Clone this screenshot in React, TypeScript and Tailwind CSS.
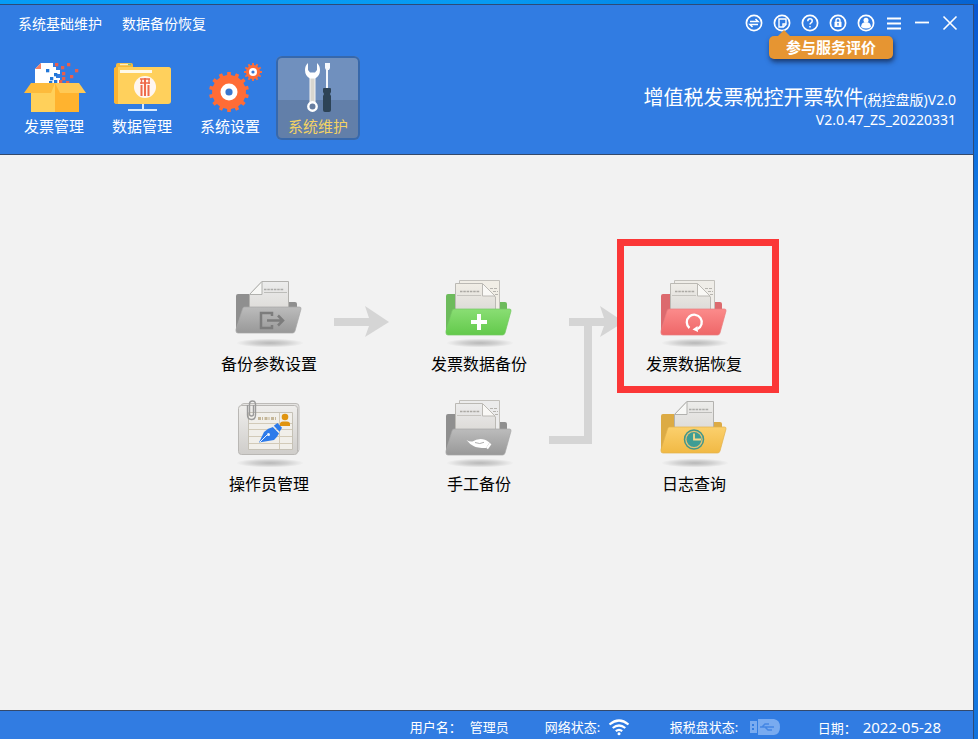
import type { ReactNode } from "react";

type Palette = { back: string; top: string; bottom: string; edge: string; paper: string };

const palettes: Record<string, Palette> = {
  gray: { back: "#8f8f8f", top: "#bcbcbc", bottom: "#989898", edge: "#a8a8a8", paper: "#ececec" },
  green: { back: "#6dbb5c", top: "#8ade74", bottom: "#63c94b", edge: "#74c962", paper: "#f1eee6" },
  red: { back: "#dc6a6e", top: "#fb8b8b", bottom: "#ee6768", edge: "#ea7c7e", paper: "#efede8" },
  yellow: { back: "#dcab45", top: "#fbd06d", bottom: "#f1b944", edge: "#e3b24c", paper: "#ececea" },
};

function IconShadow({ id }: { id: string }) {
  return (
    <>
      <defs>
        <radialGradient id={id + "-shadow"}>
          <stop offset="0" stopColor="#000" stopOpacity=".24" />
          <stop offset=".5" stopColor="#000" stopOpacity=".14" />
          <stop offset="1" stopColor="#000" stopOpacity="0" />
        </radialGradient>
      </defs>
      <ellipse cx="41" cy="65" rx="34" ry="4.500" fill={"url(#" + id + "-shadow)"} />
    </>
  );
}

function Folder({ id, tone, double, children }: { id: string; tone: string; double?: boolean; children: ReactNode }) {
  const c = palettes[tone];
  return (
    <svg width="80" height="72" viewBox="0 0 80 72" aria-hidden="true">
      <defs>
        <linearGradient id={id + "-front"} x1="0" y1="0" x2="0" y2="1">
          <stop offset="0" stopColor={c.top} />
          <stop offset="1" stopColor={c.bottom} />
        </linearGradient>
        <linearGradient id={id + "-paper"} x1="0" y1="0" x2="0" y2="1">
          <stop offset="0" stopColor={c.paper} />
          <stop offset="1" stopColor="#dddbd8" />
        </linearGradient>
      </defs>
      <IconShadow id={id} />
      {double ? (
        <>
          <path d="M7 18q0-2 2-2h9v8h48q2 0 2 2v14L7 53z" fill={c.back} />
          <path d="M20.500 2.500h40v30h-40z" fill={c.paper} stroke="#c2c0bb" />
          <path d="M51 10.500h8M54 13.500h5M48 16.500h12" stroke="#b5b3ae" strokeDasharray="3 1" />
          <path d="M16.500 5.500h26.500l13.500 13.500v13h-40z" fill={"url(#" + id + "-paper)"} stroke="#bbb9b4" />
          <path d="M43.500 5.500v12.500h12.500z" fill="#f9f8f5" stroke="#bbb9b4" />
          <path d="M21 13.500h20" stroke="#aba9a4" strokeWidth="1.500" strokeDasharray="2.500 .8" />
          <path d="M18 17.500h24" stroke="#c6c4bf" />
          <path d="M15 31q-1.500 0-2 2L7 53v2q0 2 2 2h54.500q2 0 2.500-2l6-22q.4-2-1.500-2z" fill={"url(#" + id + "-front)"} stroke={c.edge} strokeWidth=".7" />
        </>
      ) : (
        <>
          <path d="M7 18q0-2 2-2h11v8h46q2 0 2 2v12L7 52z" fill={c.back} />
          <path d="M33 3.500h26.500v30h-39V16.500z" fill={"url(#" + id + "-paper)"} stroke="#b3b2af" />
          <path d="M33 3.500v13H20.500z" fill="#f8f8f6" stroke="#b1b1ae" />
          <path d="M35 11.500h20" stroke="#adadaa" strokeWidth="1.500" strokeDasharray="2.500 .8" />
          <path d="M35 14.500h23" stroke="#bcbcb9" />
          <path d="M15.500 29q-1.500 0-2 2L7 51.500V53q0 2 2 2h54.500q2 0 2.500-2l6-22q.4-2-1.500-2z" fill={"url(#" + id + "-front)"} stroke={c.edge} strokeWidth=".7" />
        </>
      )}
      {children}
    </svg>
  );
}

function OperatorIcon() {
  return (
    <svg width="80" height="72" viewBox="0 0 80 72" aria-hidden="true">
      <defs>
        <linearGradient id="card" x1="0" y1="0" x2="0" y2="1">
          <stop offset="0" stopColor="#efeeec" />
          <stop offset="1" stopColor="#cfcdca" />
        </linearGradient>
      </defs>
      <IconShadow id="operator" />
      <rect x="12" y="5.500" width="58" height="49" rx="3" fill="#e5e4e2" stroke="#bdbbb8" />
      <rect x="9.500" y="7.500" width="59" height="49" rx="3" fill="url(#card)" stroke="#b9b7b4" />
      <path d="M19.500 14.500h44v37h-44z" fill="#f1efea" stroke="#c5c1b6" />
      <path d="M20 25.500h43M20 31.500h43M20 38.500h43M20 45.500h43M50.500 15v36" stroke="#d2cab8" />
      <path d="M29 20.500h19" stroke="#c4b698" strokeWidth="3" strokeDasharray="3 1 1 1.500" />
      <circle cx="56" cy="19" r="3.300" fill="#e0940f" />
      <path d="M51 28v-2q0-2.500 3-2.500h4q3 0 3 2.500v2z" fill="#e0940f" />
      <path d="M18.500 7v10q0 4.500 4 4.500t4-4.500V6q0-3-3-3t-3 3v10q0 2 2 2t2-2V7" fill="none" stroke="#9a9a9a" strokeWidth="1.400" />
      <path d="M30 44.500l5-10.500q4-4 9-5l6 6.500q-2 4-5 6.500z" fill="#2d7bea" />
      <path d="M44.800 27.800l3.700-2.800 4.500 4.800-2.500 4z" fill="#2d7bea" />
      <path d="M44 28.500l6 6.500" stroke="#cfe0f6" strokeWidth=".8" />
      <path d="M31 44l7-7" stroke="#eef4fb" strokeWidth="1" />
      <circle cx="39.500" cy="36.500" r="1.500" fill="#eef4fb" />
    </svg>
  );
}

function gearPath(cx: number, cy: number, outer: number, inner: number, teeth: number) {
  const points: string[] = [];
  const step = (Math.PI * 2) / teeth;
  for (let i = 0; i < teeth; i++) {
    [[-0.25, inner], [-0.2, outer], [0.2, outer], [0.25, inner]].forEach(([k, r]) => {
      const a = i * step + k * step - Math.PI / 2;
      points.push((cx + Math.cos(a) * r).toFixed(2) + " " + (cy + Math.sin(a) * r).toFixed(2));
    });
  }
  return "M" + points.join("L") + "Z";
}

function BoxIcon() {
  const red = [[43, 7], [49, 10], [55, 7], [63, 13], [58, 19], [50, 21], [54, 25], [47, 24], [50, 16]];
  const blue = [[34, 13], [38, 21], [42, 17], [37, 25], [42, 24]];
  return (
    <svg width="84" height="60" viewBox="0 0 84 60" aria-hidden="true">
      <path d="M29 7h12v4h3v3h4v4h-4v4h4v6H23V13z" fill="#fff" />
      <path d="M29 7v6h-6z" fill="#f58265" />
      {blue.map(([x, y]) => <rect key={x + "-" + y} x={x} y={y} width="3.300" height="3.300" fill="#2277d8" />)}
      {red.map(([x, y]) => <rect key={x + "-" + y} x={x} y={y} width="3.300" height="3.300" fill="#e95f4c" />)}
      <path d="M19 27h24v29H19z" fill="#ffd05a" />
      <path d="M43 27h24v29H43z" fill="#ffb32f" />
      <path d="M19 27h24l-4 10H12z" fill="#fdbb3c" />
      <path d="M43 27h24l7 10H48z" fill="#ffc955" />
    </svg>
  );
}

function DataIcon() {
  return (
    <svg width="84" height="60" viewBox="0 0 84 60" aria-hidden="true">
      <path d="M16 12V9q0-2 2-2h13q2 0 2 2v2h35q3 0 3 3v8H14z" fill="#f5b93b" />
      <path d="M20 8.500h10" stroke="#fff0c0" strokeWidth="1.500" />
      <path d="M28 8.500h3" stroke="#7cbf78" strokeWidth="1.500" />
      <path d="M14 14q0-3 3-3h51q3 0 3 3v31q0 3-3 3H17q-3 0-3-3z" fill="#ffd05c" />
      <path d="M17 11h1v37h-1q-3 0-3-3V14q0-3 3-3z" fill="#fbb432" />
      <path d="M20 14h32v3H20z" fill="#fff9e8" />
      <circle cx="45" cy="31" r="11" fill="#fff6ef" />
      <path d="M41.500 29v11M45 22v18M48.500 29v11" stroke="#ee6a4a" strokeWidth="2" />
      <path d="M40 23h10M40 27h10M41.500 23v5M49 23v5" stroke="#ee6a4a" strokeWidth="1.400" />
      <path d="M43 48v6M28 54h29" stroke="#d5eaff" strokeWidth="2" />
    </svg>
  );
}

function GearsIcon() {
  return (
    <svg width="84" height="60" viewBox="0 0 84 60" aria-hidden="true">
      <path d={gearPath(41, 36, 20, 17, 14)} fill="#ff6c36" />
      <circle cx="41" cy="36" r="8.500" fill="#fff" />
      <circle cx="41" cy="36" r="3.600" fill="#3977ce" />
      <path d={gearPath(65, 16, 9, 7, 12)} fill="#ff6c36" />
      <circle cx="65" cy="16" r="4" fill="#fff" />
      <circle cx="65" cy="16" r="1.600" fill="#3977ce" />
    </svg>
  );
}

function ToolsIcon() {
  return (
    <svg width="84" height="60" viewBox="0 0 84 60" aria-hidden="true">
      <path d="M34 20h5v27h-5z" fill="#d8d6cf" stroke="#f3f3f3" strokeWidth="1" />
      <path d="M32 7q-3 2.500-3 7 0 6 5 8.500h5q5-2.500 5-8.500 0-4.500-3-7v7l-2 2.500h-5L32 14z" fill="#fff" />
      <circle cx="36.500" cy="50.500" r="4.200" fill="#677d9f" stroke="#fff" strokeWidth="2.400" />
      <path d="M49 7h5v5l-1 2h-1v18h-2V14l-1-2z" fill="#f5f8fc" />
      <path d="M47 33q0-1 1-1h6q1 0 1 1v3l-1 2 1 2v14q0 2-2 2h-4q-2 0-2-2V40l1-2-1-2z" fill="#2d4356" />
    </svg>
  );
}

const tools = [
  { label: "发票管理", icon: <BoxIcon /> },
  { label: "数据管理", icon: <DataIcon /> },
  { label: "系统设置", icon: <GearsIcon /> },
  { label: "系统维护", icon: <ToolsIcon />, active: true },
];

const windowButtons: { label: string; art: ReactNode }[] = [
  {
    label: "切换",
    art: (
      <>
        <circle cx="10" cy="10" r="7.600" />
        <path d="M6 8.500h8l-2.500-2.500M14 11.500H6l2.500 2.500" strokeWidth="1.500" />
      </>
    ),
  },
  {
    label: "服务评价",
    art: (
      <>
        <circle cx="10" cy="10" r="7.600" />
        <path d="M7 6h7v5.500L11.500 14H7zM14 11h-3v3" strokeWidth="1.400" />
      </>
    ),
  },
  {
    label: "帮助",
    art: (
      <>
        <circle cx="10" cy="10" r="7.600" />
        <path d="M7.800 8.200q0-2.400 2.200-2.400t2.200 2.100q0 1.200-1.200 1.900-1 .6-1 1.700M10 13v1.600" strokeWidth="1.500" />
      </>
    ),
  },
  {
    label: "锁定",
    art: (
      <>
        <circle cx="10" cy="10" r="7.600" />
        <path d="M8 9V7.500q0-2 2-2t2 2V9" strokeWidth="1.400" />
        <path d="M6.500 8.800h7V14h-7z" fill="#fff" stroke="none" />
        <path d="M10 10v2.500" stroke="#317ce2" strokeWidth="1.300" />
      </>
    ),
  },
  {
    label: "用户",
    art: (
      <>
        <circle cx="10" cy="10" r="7.600" />
        <circle cx="10" cy="7.300" r="2.500" fill="#fff" stroke="none" />
        <path d="M5 14q.5-4.500 3.500-4.800h3Q14.500 9.500 15 14q-2 1.500-5 1.500T5 14z" fill="#fff" stroke="none" />
      </>
    ),
  },
  { label: "菜单", art: <path d="M3 5.500h14M3 10.500h14M3 15.500h14" strokeWidth="1.800" /> },
  { label: "最小化", art: <path d="M3 9.500h14" strokeWidth="1.800" /> },
  { label: "关闭", art: <path d="M3.500 3.500l13 13M16.500 3.500l-13 13" strokeWidth="1.600" /> },
];

function TaskButton({ label, children }: { label: string; children: ReactNode }) {
  return (
    <button type="button" className="flex w-full flex-col items-center">
      {children}
      <span className="text-base leading-7 whitespace-nowrap text-black">{label}</span>
    </button>
  );
}

export default function App() {
  return (
    <div className="flex min-h-screen flex-col bg-linear-to-b from-[#0a55cf] via-[#2196f3] to-[#1273dd] pr-1 font-['Noto_Sans','Noto_Sans_CJK_SC',sans-serif]">
      <div className="-mr-1 h-1 bg-linear-to-r from-[#069cf6] via-[#079af2] to-[#0763d2]" />
      <div className="flex grow flex-col border-t border-r border-[#2d4b78] bg-[#f2f2f2]">
        <header className="border-b border-[#34496b] bg-[#317ce2] pb-3.5 text-white">
          <div className="flex items-start justify-between pr-[9px] pl-4.5">
            <nav className="flex gap-5 pt-2 text-sm leading-[22px]">
              <button type="button">系统基础维护</button>
              <button type="button">数据备份恢复</button>
            </nav>
            <div className="relative flex pt-2">
              {windowButtons.map((b) => (
                <button key={b.label} type="button" aria-label={b.label} className="flex w-7 justify-center">
                  <svg width="20" height="20" viewBox="0 0 20 20" fill="none" stroke="#fff" strokeWidth="1.700" aria-hidden="true">
                    {b.art}
                  </svg>
                </button>
              ))}
              <div role="tooltip" className="absolute top-[31px] left-[29px] w-[124px] rounded-[5px] bg-[#e69532] text-center text-[15px] leading-[23px] font-bold shadow-[1px_3px_5px_rgba(20,40,80,0.8)]">
                <svg className="absolute -top-1.5 left-2" width="14" height="7" viewBox="0 0 14 7" aria-hidden="true">
                  <path d="M0 7l7-7 7 7z" fill="#e69532" />
                </svg>
                参与服务评价
              </div>
            </div>
          </div>
          <div className="mt-[21px] flex items-start justify-between pr-[17px] pl-3">
            <nav className="flex gap-1">
              {tools.map((t) => (
                <button
                  key={t.label}
                  type="button"
                  className={
                    t.active
                      ? "flex h-[84px] w-[84px] flex-col items-center rounded-md bg-linear-to-b from-[#7090be] from-52% to-[#627fa9] to-52% text-[#f3d264] inset-ring-2 inset-ring-[#3768ab]"
                      : "flex h-[84px] w-[84px] flex-col items-center"
                  }
                >
                  {t.icon}
                  <span className="text-[15px] leading-5">{t.label}</span>
                </button>
              ))}
            </nav>
            <div className="pt-[30px] text-right text-sm">
              <h1 className="leading-6">
                <span className="text-xl leading-6">增值税发票税控开票软件</span>(税控盘版)V2.0
              </h1>
              <p className="leading-4">V2.0.47_ZS_20220331</p>
            </div>
          </div>
        </header>

        <main className="flex grow items-start justify-center pt-[123px] pr-2.5">
          <div className="grid grid-cols-[110px_100px_110px_105px_110px] gap-y-5">
            <TaskButton label="备份参数设置">
              <Folder id="params" tone="gray">
                <path d="M43 38v-3H32v15h11v-3" fill="none" stroke="#7c7c7c" strokeWidth="2.500" />
                <path d="M38 42.500h16M49 37.500l5 5-5 5" fill="none" stroke="#7c7c7c" strokeWidth="2.500" />
              </Folder>
            </TaskButton>
            <svg width="100" height="100" viewBox="0 0 100 100" aria-hidden="true">
              <path d="M10 40h35l-4-12 24 16-24 15 4-11H10z" fill="#d5d5d5" />
            </svg>
            <TaskButton label="发票数据备份">
              <Folder id="backup" tone="green" double>
                <path d="M40 36v16M32 44h16" stroke="#fff" strokeWidth="4" />
              </Folder>
            </TaskButton>
            <svg className="row-span-2" width="105" height="220" viewBox="0 0 105 220" aria-hidden="true">
              <path d="M35 40h35l-4-12 24 16-24 15 4-11H58v118H15v-8h35V48H35z" fill="#d5d5d5" />
            </svg>
            <div className="relative">
              <TaskButton label="发票数据恢复">
                <Folder id="restore" tone="red" double>
                  <path d="M35.500 50a7.500 7.500 0 1 1 8 1" fill="none" stroke="#fff" strokeWidth="2.300" />
                  <path d="M38.500 51.500l5-3.500.5 6z" fill="#fff" />
                </Folder>
              </TaskButton>
              <div className="pointer-events-none absolute -top-[39px] -right-[30px] -bottom-[15px] -left-[22px] border-7 border-[#fb3737]" />
            </div>
            <TaskButton label="操作员管理">
              <OperatorIcon />
            </TaskButton>
            <div className="col-start-3">
              <TaskButton label="手工备份">
                <Folder id="manual" tone="gray" double>
                  <path d="M27.500 42q3 2 6 1.500 3.500-2.500 8-2.500 5 0 7.500 2.500l1.500 1-3.500 5.500q-9 0-12.500-2-4-2-7-6z" fill="#fff" />
                  <path d="M36 44.500q5 2.200 9-.2" fill="none" stroke="#a6a6a6" strokeWidth=".9" />
                  <path d="M51.500 45.500l-3.500 5" stroke="#fff" strokeWidth="2.200" />
                </Folder>
              </TaskButton>
            </div>
            <div className="col-start-5">
              <TaskButton label="日志查询">
                <Folder id="log" tone="yellow">
                  <circle cx="40" cy="41.500" r="9.500" fill="#e4c276" stroke="#43968a" strokeWidth="1.500" />
                  <circle cx="40" cy="41.500" r="7.500" fill="#3f9d94" />
                  <path d="M40 35.500v6h7" fill="none" stroke="#f6d98a" strokeWidth="1.800" />
                </Folder>
              </TaskButton>
            </div>
          </div>
        </main>

        <footer className="flex h-[29px] items-center justify-end border-t border-[#34496b] bg-[#317ce2] pt-1 pr-8 text-[13px] leading-6 whitespace-nowrap text-white">
          <p className="w-[135px]">
            用户名：<span className="ml-2">管理员</span>
          </p>
          <p className="flex w-[125px] items-center gap-2">
            网络状态:
            <svg width="22" height="18" viewBox="0 0 22 18" fill="none" stroke="#fff" strokeWidth="2.200" aria-hidden="true">
              <path d="M1.500 6.500q9.500-8 19 0M4.700 10q6.300-5 12.600 0M7.800 13.200q3.200-2.500 6.400 0" />
              <circle cx="11" cy="15.800" r="1.500" fill="#fff" stroke="none" />
            </svg>
          </p>
          <p className="flex w-[148px] items-center gap-3">
            报税盘状态:
            <svg width="31" height="16" viewBox="0 0 31 16" aria-hidden="true">
              <path d="M0 2h7v12H0z" fill="#79abf0" />
              <path d="M2 5h2v2H2zM2 9h2v2H2z" fill="#317ce2" />
              <path d="M8 0h16q6 1 6 8t-6 8H8z" fill="#79abf0" />
              <path d="M10 8h14M12 8l3-3h4M15 8l3 3h4" fill="none" stroke="#4486e4" strokeWidth="1.500" />
            </svg>
          </p>
          <p>
            日期：<time className="ml-1.5 text-[15px] leading-6">2022-05-28</time>
          </p>
        </footer>
      </div>
    </div>
  );
}
